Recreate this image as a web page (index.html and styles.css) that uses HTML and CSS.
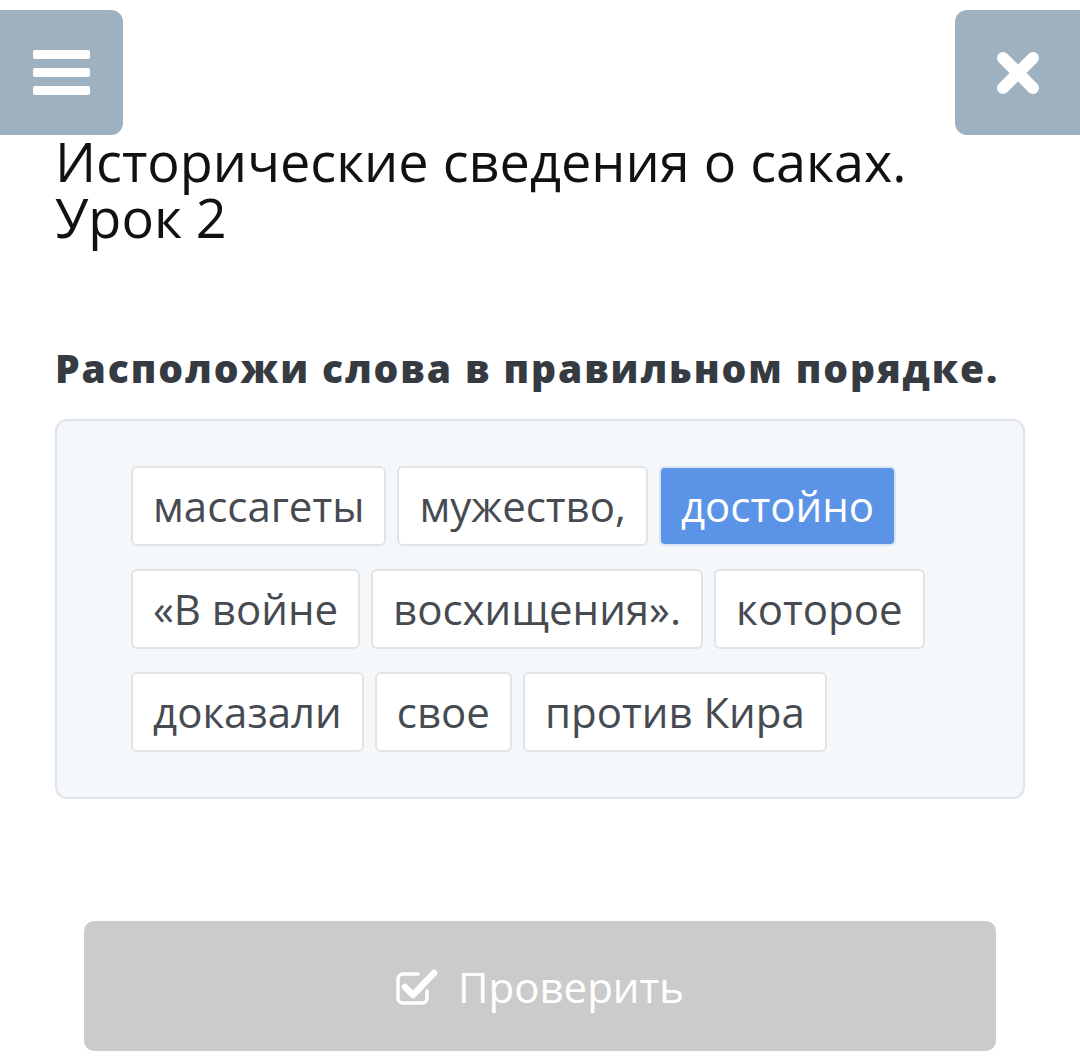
FILE: index.html
```html
<!DOCTYPE html>
<html lang="ru">
<head>
<meta charset="utf-8">
<title>Исторические сведения о саках. Урок 2</title>
<link rel="stylesheet" href="styles.css">
</head>
<body>
<button class="nav-btn nav-menu" aria-label="Меню">
  <span class="bar"></span><span class="bar"></span><span class="bar"></span>
</button>
<button class="nav-btn nav-close" aria-label="Закрыть">
  <svg width="44" height="44" viewBox="0 0 44 44"><path d="M7 7 L37 37 M37 7 L7 37" stroke="#fff" stroke-width="12" stroke-linecap="round" fill="none"/></svg>
</button>
<main class="page">
  <h1 class="title">Исторические сведения о саках. Урок 2</h1>
  <h2 class="task">Расположи слова в правильном порядке.</h2>
  <div class="words">
    <span class="chip">массагеты</span>
    <span class="chip">мужество,</span>
    <span class="chip chip-active">достойно</span>
    <span class="chip">«В войне</span>
    <span class="chip">восхищения».</span>
    <span class="chip">которое</span>
    <span class="chip">доказали</span>
    <span class="chip">свое</span>
    <span class="chip">против Кира</span>
  </div>
  <div class="actions">
    <button class="check-btn">
      <svg class="check-icon" width="44" height="40" viewBox="0 0 44 40"><path d="M31 24 V31 a5 5 0 0 1 -5 5 H7 a5 5 0 0 1 -5 -5 V12 a5 5 0 0 1 5 -5 H22" stroke="#fff" stroke-width="3.5" fill="none" stroke-linecap="round"/><path d="M9 20 L17 28 L38 6" stroke="#fff" stroke-width="6.5" fill="none" stroke-linecap="round" stroke-linejoin="round"/></svg>
      <span>Проверить</span>
    </button>
  </div>
</main>
</body>
</html>
```

FILE: styles.css
```css
* { box-sizing: border-box; }
html, body { margin: 0; padding: 0; background: #fff; }
body {
  font-family: "Open Sans", "Noto Sans", sans-serif;
  width: 1080px;
  height: 1059px;
  overflow: hidden;
  position: relative;
}
.nav-btn {
  position: absolute;
  top: 10px;
  height: 125px;
  border: none;
  background: #9db1c0;
  padding: 0;
  display: flex;
  align-items: center;
  justify-content: center;
}
.nav-menu {
  left: 0;
  width: 123px;
  border-radius: 0 12px 12px 0;
  flex-direction: column;
  gap: 9px;
}
.nav-menu .bar {
  display: block;
  width: 57px;
  height: 9px;
  background: #fff;
  border-radius: 2px;
}
.nav-close {
  right: 0;
  width: 125px;
  border-radius: 12px 0 0 12px;
}
.page {
  padding: 133px 55px 0 55px;
}
.title {
  margin: 0;
  font-size: 54px;
  line-height: 56px;
  font-weight: 400;
  color: #111;
  width: 900px;
}
.task {
  margin: 97px 0 0 0;
  font-size: 39px;
  line-height: 51px;
  font-weight: 800;
  letter-spacing: 1.9px;
  color: #363b42;
  white-space: nowrap;
}
.words {
  margin-top: 26px;
  width: 970px;
  border: 2px solid #dfe5ea;
  border-radius: 12px;
  background: #f4f8fb;
  padding: 45px 60px 45px 74px;
  display: flex;
  flex-wrap: wrap;
  column-gap: 11px;
  row-gap: 23px;
  align-content: flex-start;
}
.chip {
  display: inline-block;
  height: 80px;
  line-height: 76px;
  padding: 0 20px;
  font-size: 42px;
  color: #464b51;
  background: #fff;
  border: 2px solid #e3e3e3;
  border-radius: 6px;
  white-space: nowrap;
}
.chip-active {
  background: #5b93e6;
  border-color: #d9e5f5;
  color: #fff;
}
.actions {
  margin-top: 122px;
  padding: 0 29px;
}
.check-btn {
  width: 912px;
  height: 130px;
  border: none;
  border-radius: 10px;
  background: #cbcbcb;
  color: #fff;
  font-family: "Open Sans", "Noto Sans", sans-serif;
  font-size: 42px;
  display: flex;
  align-items: center;
  justify-content: center;
  gap: 18px;
  padding: 0;
}
.check-icon { margin-top: 2px; }
```
